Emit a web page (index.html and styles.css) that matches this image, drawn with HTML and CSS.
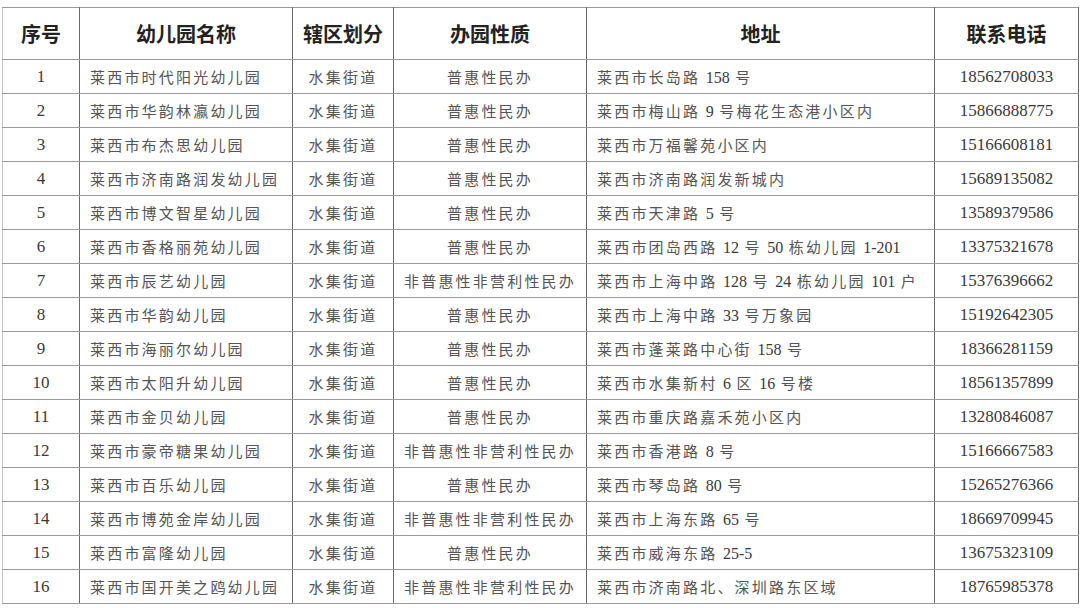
FILE: index.html
```html
<!DOCTYPE html>
<html lang="zh">
<head>
<meta charset="utf-8">
<link rel="stylesheet" href="styles.css">
</head>
<body>
<div class="wrap">
<table class="list">
<colgroup>
<col class="c1"><col class="c2"><col class="c3"><col class="c4"><col class="c5"><col class="c6">
</colgroup>
<thead>
<tr><th>序号</th><th>幼儿园名称</th><th>辖区划分</th><th>办园性质</th><th>地址</th><th>联系电话</th></tr>
</thead>
<tbody>
<tr><td class="num">1</td><td class="left">莱西市时代阳光幼儿园</td><td>水集街道</td><td>普惠性民办</td><td class="left">莱西市长岛路 <span class="n">158</span> 号</td><td class="num">18562708033</td></tr>
<tr><td class="num">2</td><td class="left">莱西市华韵林瀛幼儿园</td><td>水集街道</td><td>普惠性民办</td><td class="left">莱西市梅山路 <span class="n">9</span> 号梅花生态港小区内</td><td class="num">15866888775</td></tr>
<tr><td class="num">3</td><td class="left">莱西市布杰思幼儿园</td><td>水集街道</td><td>普惠性民办</td><td class="left">莱西市万福馨苑小区内</td><td class="num">15166608181</td></tr>
<tr><td class="num">4</td><td class="left">莱西市济南路润发幼儿园</td><td>水集街道</td><td>普惠性民办</td><td class="left">莱西市济南路润发新城内</td><td class="num">15689135082</td></tr>
<tr><td class="num">5</td><td class="left">莱西市博文智星幼儿园</td><td>水集街道</td><td>普惠性民办</td><td class="left">莱西市天津路 <span class="n">5</span> 号</td><td class="num">13589379586</td></tr>
<tr><td class="num">6</td><td class="left">莱西市香格丽苑幼儿园</td><td>水集街道</td><td>普惠性民办</td><td class="left">莱西市团岛西路 <span class="n">12</span> 号 <span class="n">50</span> 栋幼儿园 <span class="n">1-201</span></td><td class="num">13375321678</td></tr>
<tr><td class="num">7</td><td class="left">莱西市辰艺幼儿园</td><td>水集街道</td><td>非普惠性非营利性民办</td><td class="left">莱西市上海中路 <span class="n">128</span> 号 <span class="n">24</span> 栋幼儿园 <span class="n">101</span> 户</td><td class="num">15376396662</td></tr>
<tr><td class="num">8</td><td class="left">莱西市华韵幼儿园</td><td>水集街道</td><td>普惠性民办</td><td class="left">莱西市上海中路 <span class="n">33</span> 号万象园</td><td class="num">15192642305</td></tr>
<tr><td class="num">9</td><td class="left">莱西市海丽尔幼儿园</td><td>水集街道</td><td>普惠性民办</td><td class="left">莱西市蓬莱路中心街 <span class="n">158</span> 号</td><td class="num">18366281159</td></tr>
<tr><td class="num">10</td><td class="left">莱西市太阳升幼儿园</td><td>水集街道</td><td>普惠性民办</td><td class="left">莱西市水集新村 <span class="n">6</span> 区 <span class="n">16</span> 号楼</td><td class="num">18561357899</td></tr>
<tr><td class="num">11</td><td class="left">莱西市金贝幼儿园</td><td>水集街道</td><td>普惠性民办</td><td class="left">莱西市重庆路嘉禾苑小区内</td><td class="num">13280846087</td></tr>
<tr><td class="num">12</td><td class="left">莱西市豪帝糖果幼儿园</td><td>水集街道</td><td>非普惠性非营利性民办</td><td class="left">莱西市香港路 <span class="n">8</span> 号</td><td class="num">15166667583</td></tr>
<tr><td class="num">13</td><td class="left">莱西市百乐幼儿园</td><td>水集街道</td><td>普惠性民办</td><td class="left">莱西市琴岛路 <span class="n">80</span> 号</td><td class="num">15265276366</td></tr>
<tr><td class="num">14</td><td class="left">莱西市博苑金岸幼儿园</td><td>水集街道</td><td>非普惠性非营利性民办</td><td class="left">莱西市上海东路 <span class="n">65</span> 号</td><td class="num">18669709945</td></tr>
<tr><td class="num">15</td><td class="left">莱西市富隆幼儿园</td><td>水集街道</td><td>普惠性民办</td><td class="left">莱西市威海东路 <span class="n">25-5</span></td><td class="num">13675323109</td></tr>
<tr><td class="num">16</td><td class="left">莱西市国开美之鸥幼儿园</td><td>水集街道</td><td>非普惠性非营利性民办</td><td class="left">莱西市济南路北、深圳路东区域</td><td class="num">18765985378</td></tr>
</tbody>
</table>
</div>
</body>
</html>
```

FILE: styles.css
```css
html, body {
  margin: 0;
  padding: 0;
  background: #ffffff;
}
.wrap {
  padding: 7px 0 0 2px;
}
.list {
  border-collapse: collapse;
  table-layout: fixed;
  width: 1076px;
  font-family: "Noto Sans CJK SC", sans-serif;
  color: #555555;
}
.c1 { width: 77px; }
.c2 { width: 213px; }
.c3 { width: 101px; }
.c4 { width: 193px; }
.c5 { width: 348px; }
.c6 { width: 144px; }
.list th, .list td {
  border-top: 1px solid #9a9a9a;
  border-bottom: 1px solid #9a9a9a;
  border-left: 1px solid #6a6a6a;
  border-right: 1px solid #6a6a6a;
  padding: 0;
  text-align: center;
  white-space: nowrap;
  overflow: hidden;
}
.list th {
  height: 51px;
  font-size: 20px;
  font-weight: bold;
  color: #222222;
}
.list td {
  height: 33px;
  font-size: 15px;
  letter-spacing: 2.2px;
}
.list tr > :first-child {
  border-left-color: #c4c4c4;
}
.list td.left {
  text-align: left;
  padding-left: 10px;
}
.list td.num, .n {
  font-family: "Liberation Serif", serif;
  font-size: 17px;
  letter-spacing: 0;
  color: #3a3a3a;
}
.n { font-size: 16px; }
```
